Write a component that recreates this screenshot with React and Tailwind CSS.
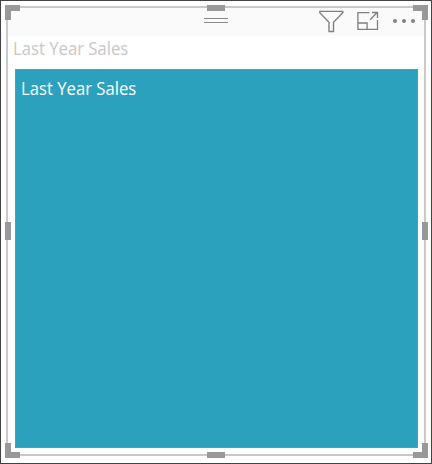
const HANDLES = [
  'left-[-1px] top-[-1px] w-[15px] h-[15px] border-t-6 border-l-6',
  'right-[-2px] top-[-1px] w-[15px] h-[15px] border-t-6 border-r-6',
  'left-[-1px] bottom-[-2px] w-[15px] h-[15px] border-b-6 border-l-6',
  'right-[-2px] bottom-[-2px] w-[15px] h-[15px] border-b-6 border-r-6',
  'left-[201px] top-[-1px] w-[18px] h-[6px] bg-[#999]',
  'left-[201px] bottom-[-2px] w-[18px] h-[6px] bg-[#999]',
  'left-[-1px] top-[216px] w-[6px] h-[18px] bg-[#999]',
  'right-[-2px] top-[216px] w-[6px] h-[18px] bg-[#999]',
];

function Filter() {
  return (
    <svg width="26" height="24" viewBox="0 0 26 24" fill="none" stroke="#808080" strokeWidth="1.4">
      <path d="M1.8 2.4H24.8V3.7L15.5 13.2V22.5H11V13.2L1.8 3.7Z" />
    </svg>
  );
}

function FocusMode() {
  return (
    <svg width="22" height="20" viewBox="0 0 22 20" fill="none" stroke="#808080" strokeWidth="1.3">
      <path d="M12.5 1.6H.9V18.4H20.5V9M.9 12H10.1V18.4M13 8.7L20.2 1.5M15 1.5H20.5V7" />
    </svg>
  );
}

function Title({ children, className }) {
  return (
    <div className={`origin-left scale-x-[0.927] whitespace-nowrap font-['Open_Sans','Noto_Sans',sans-serif] text-[18px] leading-6 ${className}`}>
      {children}
    </div>
  );
}

export default function App() {
  return (
    <div className="h-[464px] w-[432px] border border-[#444244] bg-white p-[5px]">
      <div className="relative h-[450px] w-[420px]">
        <div className="flex h-full w-full flex-col border-2 border-[#c8c8c8]">
          <header className="flex h-7 shrink-0 bg-[#fafafa]">
            <div className="ml-[196px] mt-[10px] h-[5px] w-6 border-y border-[#888]" />
            <div className="ml-[90px] mt-px h-6 w-[26px]"><Filter /></div>
            <div className="ml-[13px] mt-[3px] h-5 w-[22px]"><FocusMode /></div>
            <div className="ml-[14px] mt-[11px] flex h-1 gap-[5px]">
              <span className="size-1 rounded-full bg-[#808080]" />
              <span className="size-1 rounded-full bg-[#808080]" />
              <span className="size-1 rounded-full bg-[#808080]" />
            </div>
          </header>
          <div className="h-[33px] shrink-0 pl-[5px]">
            <Title className="text-[#c8c8c8]">Last Year Sales</Title>
          </div>
          <div className="ml-[7px] h-[379px] w-[403px] border border-[#3aa8c4] bg-[#2ca1be] pl-[5px] pt-[6px]">
            <Title className="text-white">Last Year Sales</Title>
          </div>
        </div>
        {HANDLES.map((position) => (
          <span key={position} className={`absolute border-[#999] ${position}`} />
        ))}
      </div>
    </div>
  );
}
